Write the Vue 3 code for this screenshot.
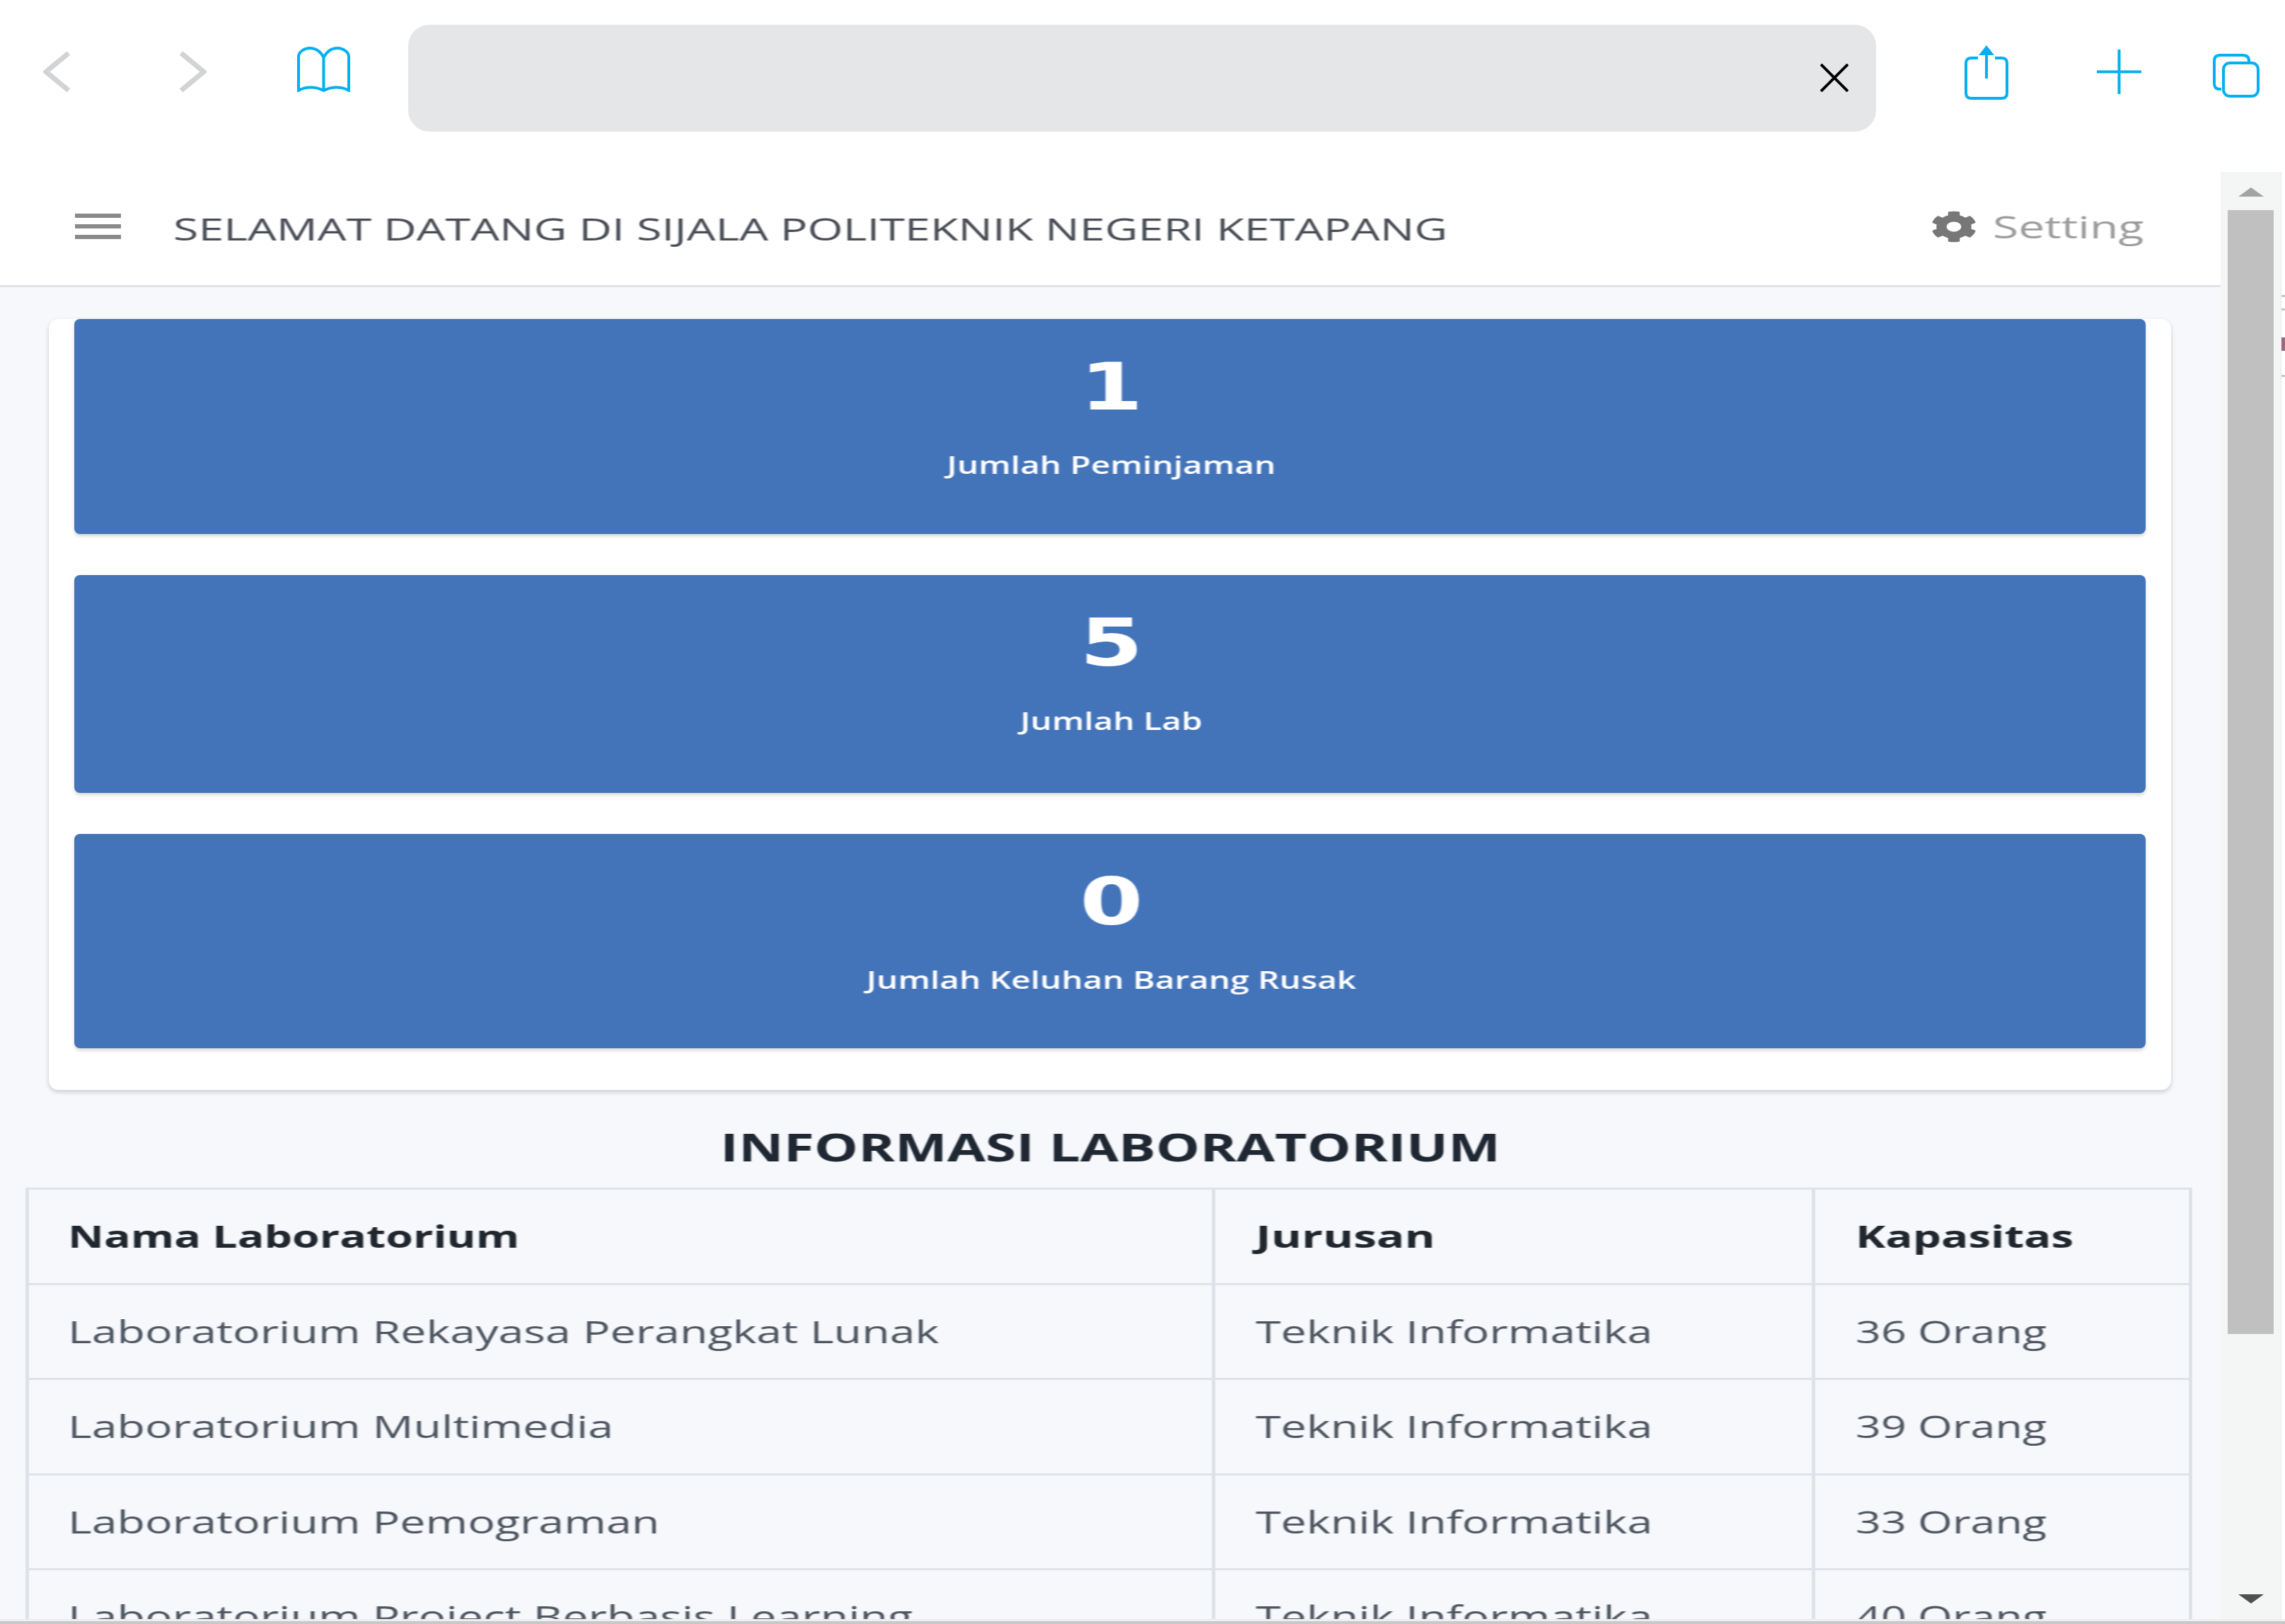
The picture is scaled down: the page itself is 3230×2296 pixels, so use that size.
<template>
  <div class="screen">
    <div class="toolbar">
      <svg class="ic back" viewBox="0 0 39 57"><path d="M36 2 4 28.500 36 55" /></svg>
      <svg class="ic forward" viewBox="0 0 40 57"><path d="M4 2 36 28.500 4 55" /></svg>
      <svg class="ic book" viewBox="0 0 75 64">
        <path d="M37.500 15C32 5 24 2 18 2 11 2 2 7 2 14V62C12 56 26 56 37.500 62 49 56 63 56 73 62V14C73 7 64 2 57 2 51 2 43 5 37.500 15V62" />
      </svg>
      <div class="urlbar">
        <svg class="close" viewBox="0 0 40 40"><path d="M1 1 39 39M39 1 1 39" /></svg>
      </div>
      <svg class="ic share" viewBox="0 0 62 77">
        <path d="M19 18H10Q2 18 2 25V68Q2 75 10 75H52Q60 75 60 68V25Q60 18 52 18H43" />
        <path d="M31 10V47" />
        <path class="solid" d="M31 0 42 14H20Z" />
      </svg>
      <svg class="ic plus" viewBox="0 0 63 63"><path d="M31.500 0V63M0 31.500H63" /></svg>
      <svg class="ic tabs" viewBox="0 0 66 62">
        <path d="M12 50H10Q2 50 2 42V10Q2 2 10 2H42Q51 2 51 10V12" />
        <rect x="15" y="13" width="49" height="47" rx="9" />
      </svg>
    </div>

    <div class="body">
      <div class="page">
        <header class="topbar">
          <div class="burger"><i></i><i></i><i></i></div>
          <span class="wide welcome">SELAMAT DATANG DI SIJALA POLITEKNIK NEGERI KETAPANG</span>
          <div class="setting">
            <svg viewBox="0 0 512 512" preserveAspectRatio="none">
              <path d="M487.400 315.700l-42.600-24.600c4.300-23.200 4.300-47 0-70.200l42.600-24.600c4.900-2.800 7.100-8.600 5.500-14-11.100-35.600-30-67.800-54.700-94.600-3.800-4.100-10-5.100-14.800-2.300L380.800 110c-17.900-15.400-38.500-27.300-60.800-35.100V25.800c0-5.600-3.900-10.500-9.400-11.700-36.700-8.200-74.300-7.800-109.200 0-5.500 1.200-9.400 6.100-9.400 11.700V75c-22.200 7.900-42.800 19.800-60.800 35.100L88.700 85.500c-4.900-2.800-11-1.900-14.800 2.300-24.700 26.700-43.600 58.900-54.700 94.600-1.700 5.400.6 11.200 5.500 14L67.300 221c-4.300 23.200-4.300 47 0 70.200l-42.600 24.600c-4.900 2.800-7.100 8.600-5.500 14 11.100 35.600 30 67.800 54.700 94.600 3.800 4.100 10 5.100 14.800 2.300l42.600-24.600c17.900 15.400 38.500 27.300 60.800 35.100v49.200c0 5.600 3.900 10.500 9.400 11.700 36.700 8.200 74.300 7.800 109.200 0 5.500-1.200 9.400-6.100 9.400-11.700v-49.200c22.200-7.900 42.800-19.800 60.800-35.100l42.600 24.600c4.900 2.800 11 1.900 14.800-2.300 24.700-26.700 43.600-58.900 54.700-94.600 1.500-5.500-.7-11.300-5.600-14.100zM256 336c-44.100 0-80-35.900-80-80s35.900-80 80-80 80 35.900 80 80-35.900 80-80 80z" />
            </svg>
            <span class="wide">Setting</span>
          </div>
        </header>

        <div class="content">
          <section class="card">
            <div v-for="s in stats" :key="s.label" class="stat">
              <div class="num">{{ s.value }}</div>
              <div class="lbl">{{ s.label }}</div>
            </div>
          </section>

          <h2 class="heading">INFORMASI LABORATORIUM</h2>

          <table class="labs">
            <colgroup>
              <col class="c1" />
              <col class="c2" />
              <col />
            </colgroup>
            <thead>
              <tr>
                <th><span class="wide">Nama Laboratorium</span></th>
                <th><span class="wide">Jurusan</span></th>
                <th><span class="wide">Kapasitas</span></th>
              </tr>
            </thead>
            <tbody>
              <tr v-for="lab in labs" :key="lab.name">
                <td><span class="wide">{{ lab.name }}</span></td>
                <td><span class="wide">{{ lab.dept }}</span></td>
                <td><span class="wide">{{ lab.cap }}</span></td>
              </tr>
            </tbody>
          </table>
        </div>
      </div>

      <div class="scrollbar">
        <div class="arrow up"></div>
        <div class="thumb"></div>
        <div class="arrow down"></div>
      </div>
      <div class="behind">
        <i class="m1"></i>
        <i class="m2"></i>
        <i class="m3"></i>
        <i class="m4"></i>
      </div>
    </div>
    <div class="bottomline"></div>
  </div>
</template>

<script setup>
const stats = [
  { value: '1', label: 'Jumlah Peminjaman' },
  { value: '5', label: 'Jumlah Lab' },
  { value: '0', label: 'Jumlah Keluhan Barang Rusak' }
]

const labs = [
  { name: 'Laboratorium Rekayasa Perangkat Lunak', dept: 'Teknik Informatika', cap: '36 Orang' },
  { name: 'Laboratorium Multimedia', dept: 'Teknik Informatika', cap: '39 Orang' },
  { name: 'Laboratorium Pemograman', dept: 'Teknik Informatika', cap: '33 Orang' },
  { name: 'Laboratorium Project Berbasis Learning', dept: 'Teknik Informatika', cap: '40 Orang' }
]
</script>

<style>
html,
body {
  margin: 0;
  background: #fff;
}
</style>

<style scoped>
.screen {
  width: 3230px;
  height: 2296px;
  display: flex;
  flex-direction: column;
  overflow: hidden;
  background: #fff;
  font-family: "Open Sans", "Liberation Sans", sans-serif;
}

/* browser chrome */
.toolbar {
  height: 243px;
  flex: none;
  display: flex;
  align-items: flex-start;
  padding-left: 61px;
}

.ic {
  flex: none;
  fill: none;
  stroke: #04b0f0;
  stroke-width: 4;
}

.ic .solid {
  fill: #04b0f0;
  stroke: none;
}

.back {
  width: 39px;
  height: 57px;
  margin-top: 73px;
  stroke: #d2d3d4;
  stroke-width: 7;
}

.forward {
  width: 40px;
  height: 57px;
  margin: 73px 0 0 152px;
  stroke: #d2d3d4;
  stroke-width: 7;
}

.book {
  width: 75px;
  height: 64px;
  margin: 66px 0 0 128px;
}

.urlbar {
  width: 2075px;
  height: 151px;
  margin: 35px 0 0 82px;
  flex: none;
  border-radius: 30px;
  background: #e5e6e8;
  display: flex;
  justify-content: flex-end;
}

.close {
  width: 40px;
  height: 40px;
  margin: 55px 39px 0 0;
  fill: none;
  stroke: #000;
  stroke-width: 4;
}

.share {
  width: 62px;
  height: 77px;
  margin: 64px 0 0 125px;
}

.plus {
  width: 63px;
  height: 63px;
  margin: 70px 0 0 125px;
}

.tabs {
  width: 66px;
  height: 62px;
  margin: 76px 0 0 101px;
}

.body {
  flex: 1;
  min-height: 0;
  display: flex;
}

.page {
  flex: 1;
  min-width: 0;
  background: #f6f8fb;
  overflow: hidden;
}

/* text in the shot is stretched sideways and a little soft */
.wide {
  display: inline-block;
  white-space: nowrap;
  transform: scaleX(1.5);
  transform-origin: left center;
  filter: blur(0.6px);
}

.topbar {
  height: 160px;
  display: flex;
  align-items: center;
  padding-left: 106px;
  background: #fff;
  border-bottom: 3px solid #dfe2e7;
}

.burger {
  width: 65px;
  flex: none;
  display: flex;
  flex-direction: column;
  gap: 9px;
  margin-top: -6px;
}

.burger i {
  display: block;
  height: 6px;
  background: #8a8a8a;
}

.welcome {
  margin-left: 74px;
  font-size: 44px;
  line-height: 60px;
  color: #494d55;
  transform: scaleX(1.467);
}

.setting {
  margin: -6px 180px 0 auto;
  display: flex;
  align-items: center;
  font-size: 44px;
  line-height: 60px;
  color: #9c9c9c;
}

.setting .wide {
  transform: scaleX(1.5);
}

.setting svg {
  width: 66px;
  height: 45px;
  margin-right: 22px;
  fill: #777;
}

.content {
  padding-top: 45px;
}

.card {
  margin: 0 70px 0 69px;
  padding: 0 36px 1px;
  background: #fff;
  border-radius: 14px;
  box-shadow: 0 3px 6px rgba(40, 50, 70, 0.22);
}

.stat {
  height: 304px;
  margin-bottom: 58px;
  padding: 47px 0 0 4px;
  box-sizing: border-box;
  border-radius: 8px;
  background: #4373b9;
  box-shadow: 0 3px 5px rgba(0, 0, 0, 0.16);
  color: #fff;
  text-align: center;
}

.stat:nth-child(2) {
  height: 308px;
}

.stat:nth-child(3) {
  height: 303px;
}

.num {
  height: 100px;
  font-family: "DejaVu Sans", sans-serif;
  font-weight: 700;
  font-size: 92px;
  line-height: 100px;
  transform: scaleX(1.4);
  filter: blur(0.6px);
}

.lbl {
  margin-top: 39px;
  font-size: 34px;
  font-weight: 600;
  line-height: 40px;
  transform: scaleX(1.405);
  filter: blur(0.6px);
}

.heading {
  margin: 51px 0 27px;
  height: 60px;
  text-align: center;
  font-size: 53px;
  font-weight: 700;
  line-height: 60px;
  color: #1f2733;
  transform: scaleX(1.48);
  filter: blur(0.6px);
}

.labs {
  margin-left: 36px;
  width: 3063px;
  table-layout: fixed;
  border-collapse: collapse;
  color: #4d5560;
  font-size: 43px;
}

.c1 {
  width: 1677px;
}

.c2 {
  width: 848px;
}

.labs th,
.labs td {
  height: 131.500px;
  padding: 0 0 0 57px;
  border: solid #dfe2e8;
  border-width: 3px 5px;
  text-align: left;
  white-space: nowrap;
}

.labs th:first-child,
.labs td:first-child {
  padding-left: 55px;
}

.labs th {
  color: #20262e;
  font-weight: 700;
}

.labs th .wide {
  transform: scaleX(1.48);
}

.labs th:first-child .wide {
  transform: scaleX(1.456);
}

.labs th:nth-child(2) .wide {
  transform: scaleX(1.53);
}

.labs td:nth-child(3) .wide {
  transform: scaleX(1.46);
}

/* fake scrollbar */
.scrollbar {
  width: 85px;
  flex: none;
  background: #f4f5f5;
  position: relative;
}

.thumb {
  position: absolute;
  left: 10px;
  right: 10px;
  top: 54px;
  height: 1589px;
  background: #c0c0c0;
}

.arrow {
  position: absolute;
  left: 25px;
  width: 0;
  height: 0;
  border-left: 18px solid transparent;
  border-right: 18px solid transparent;
}

.arrow.up {
  top: 22px;
  border-bottom: 13px solid #a3a3a3;
}

.arrow.down {
  top: 2011px;
  border-top: 13px solid #505050;
}

.behind {
  width: 6px;
  flex: none;
  position: relative;
  background: #fff;
  border-left: 1px solid #e8e8e8;
  box-sizing: border-box;
}

.behind i {
  position: absolute;
  left: 0;
  right: 0;
  height: 3px;
  background: #c8c8c8;
}

.behind .m1 {
  top: 174px;
}

.behind .m2 {
  top: 193px;
}

.behind .m3 {
  top: 234px;
  height: 19px;
  background: #9b6a7f;
}

.behind .m4 {
  top: 287px;
}

.bottomline {
  height: 7px;
  flex: none;
  background: linear-gradient(#efefef 3px, #c8c8c8 3px);
}
</style>
